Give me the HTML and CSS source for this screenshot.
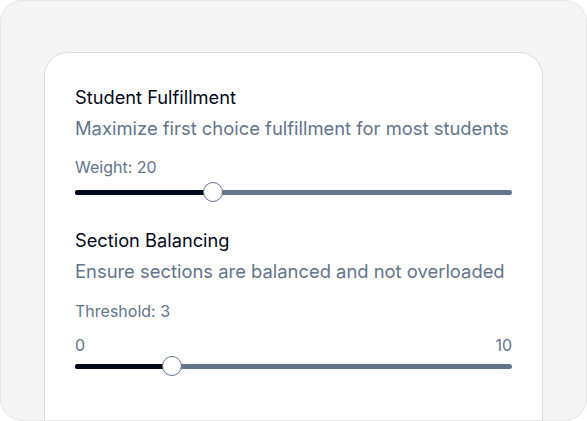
FILE: index.html
```html
<!DOCTYPE html>
<html>
<head>
<meta charset="utf-8">
<link rel="stylesheet" href="styles.css">
</head>
<body>
<div class="frame">
  <div class="card">
    <section class="setting">
      <h3 class="title">Student Fulfillment</h3>
      <p class="desc">Maximize first choice fulfillment for most students</p>
      <div class="label">Weight: 20</div>
      <div class="slider">
        <div class="track"><div class="fill" style="width: 31.6%"></div></div>
        <div class="thumb" style="left: 31.6%"></div>
      </div>
    </section>
    <section class="setting second">
      <h3 class="title">Section Balancing</h3>
      <p class="desc">Ensure sections are balanced and not overloaded</p>
      <div class="label">Threshold: 3</div>
      <div class="range-labels"><span>0</span><span>10</span></div>
      <div class="slider tight">
        <div class="track"><div class="fill" style="width: 22.2%"></div></div>
        <div class="thumb" style="left: 22.2%"></div>
      </div>
    </section>
  </div>
</div>
</body>
</html>
```

FILE: styles.css
```css
* { box-sizing: border-box; }
html, body { margin: 0; padding: 0; }
body {
  width: 587px;
  height: 421px;
  overflow: hidden;
  font-family: Inter, "Liberation Sans", sans-serif;
  background: #ffffff;
}
.frame {
  width: 587px;
  height: 421px;
  background: #f4f4f4;
  border: 1px solid #e6e6e6;
  border-radius: 22px;
  padding: 51px 44px 0 43px;
  overflow: hidden;
}
.card {
  width: 499px;
  height: 420px;
  background: #ffffff;
  border: 1px solid #dcdcdc;
  border-radius: 24px;
  padding: 30px 30px 0 30px;
}
.setting { display: flex; flex-direction: column; }
.second { margin-top: 24px; }
.title {
  margin: 0;
  font-size: 18.25px;
  line-height: 28px;
  font-weight: 400;
  color: #020817;
}
.desc {
  margin: 3px 0 0;
  font-size: 18.4px;
  line-height: 28px;
  color: #64748b;
}
.label {
  margin-top: 13px;
  font-size: 16px;
  line-height: 24px;
  color: #64748b;
}
.second .label { margin-top: 14px; }
.range-labels {
  margin-top: 12px;
  display: flex;
  justify-content: space-between;
  font-size: 16px;
  line-height: 20px;
  color: #64748b;
}
.slider {
  position: relative;
  height: 20px;
  margin-top: 3px;
  display: flex;
  align-items: center;
}
.slider.tight { margin-top: 1px; }
.track {
  width: 100%;
  height: 5px;
  border-radius: 3px;
  background: #64748b;
  overflow: hidden;
}
.fill {
  height: 100%;
  background: #020817;
}
.thumb {
  position: absolute;
  top: 0;
  width: 20px;
  height: 20px;
  margin-left: -10px;
  border-radius: 50%;
  background: #ffffff;
  border: 1.5px solid #64748b;
}
```
